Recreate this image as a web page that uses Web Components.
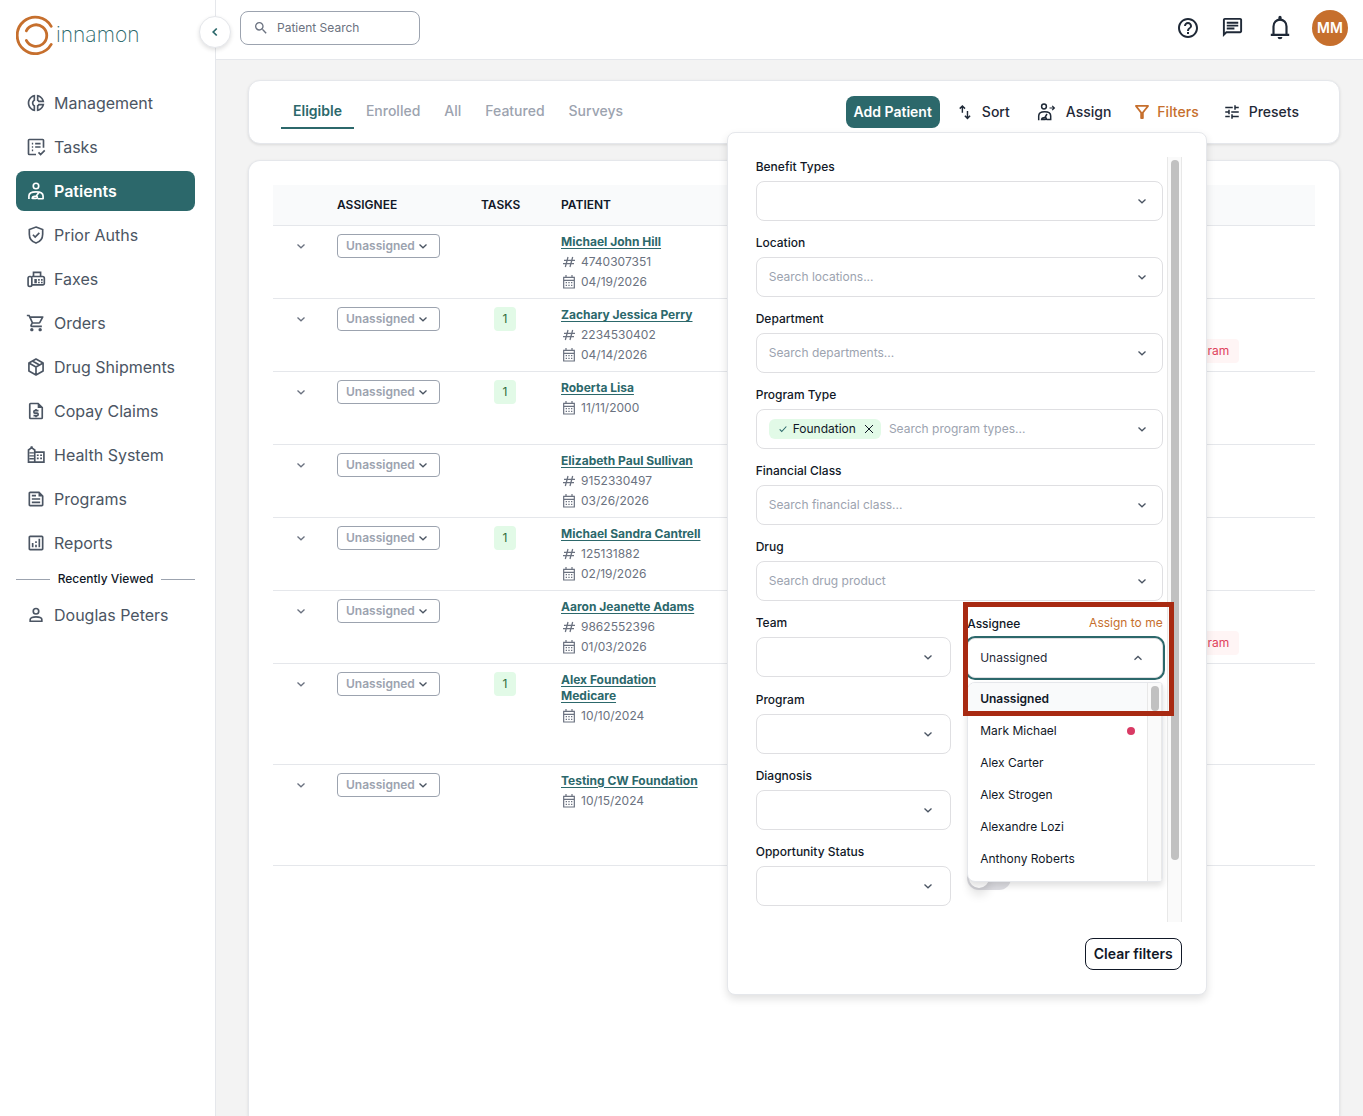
<!DOCTYPE html>
<html lang="en">
<head>
<meta charset="utf-8">
<meta name="viewport" content="width=device-width, initial-scale=1">
<title>Patients</title>
<style>
  :root {
    --teal: #2c686b;
    --orange: #c66f2d;
    --ink: #111827;
    --ink-soft: #1f2937;
    --slate: #4b5563;
    --gray: #6b7280;
    --muted: #9ca3af;
    --line: #e5e7eb;
    --field: #dfdfe2;
  }

  body {
    margin: 0;
    height: 100vh;
    overflow: hidden;
    font: 12px/16px Inter, "Liberation Sans", sans-serif;
    color: var(--ink);
    background: #f3f3f3;
  }
</style>
</head>
<body>
<patient-app></patient-app>

<script>
const base = `
  *, *::before, *::after { box-sizing: border-box; }
  button, input, select { font: inherit; color: inherit; background: none; border: 0; margin: 0; padding: 0; outline: 0; }
  button, select { cursor: pointer; }
  select { appearance: none; }
`;

const icons = {
  management: '<path d="M14.82 11h7.13c-.47-4.72-4.23-8.48-8.95-8.95v7.13c.85.31 1.51.97 1.82 1.82zM15 4.58C17 5.4 18.6 7 19.42 9h-3.43c-.28-.37-.62-.71-.99-.99V4.58zM2 12c0 5.19 3.95 9.45 9 9.95v-7.13C9.84 14.4 9 13.3 9 12c0-1.3.84-2.4 2-2.82V2.05c-5.05.5-9 4.76-9 9.95zm7-7.42v3.44c-1.23.92-2 2.39-2 3.98 0 1.59.77 3.06 2 3.99v3.44C6.04 18.24 4 15.35 4 12c0-3.35 2.04-6.24 5-7.42zm4 10.24v7.13c4.72-.47 8.48-4.23 8.95-8.95h-7.13c-.31.85-.97 1.51-1.82 1.82zm2 1.17c.37-.28.71-.61.99-.99h3.43C18.6 17 17 18.6 15 19.42v-3.43z"/>',
  tasks: '<path d="M21 13V4a1 1 0 0 0-1-1H4a1 1 0 0 0-1 1v16a1 1 0 0 0 1 1h8M11 8h6.5M11 12h6.5M7 8h1.6M7 12h1.6M7 16h1.6M15 18.5l2.5 2.5 5-5" fill="none" stroke="currentColor" stroke-width="2"/>',
  patients: '<g fill="none" stroke="currentColor" stroke-width="2"><circle cx="12" cy="6" r="3.3"/><path d="M3.5 21.5V18c0-3.4 3.4-5 8.5-5s8.5 1.6 8.5 5v3.5M7.5 21.5c0-2 1-3 3-3h1.5l3.2-4.5M12 18.5c2.5 0 2 2.5 0 2.5H7.5M14 21.3h7"/></g>',
  auths: '<path d="M12 2.5l8 3V11c0 5-3.3 9.1-8 10.7C7.3 20.1 4 16 4 11V5.5zM8.3 11.7l2.7 2.7 5-5" fill="none" stroke="currentColor" stroke-width="2"/>',
  faxes: '<g fill="none" stroke="currentColor" stroke-width="2"><rect x="2.5" y="9" width="4.5" height="12" rx="2"/><path d="M7 19h13.5a1.5 1.5 0 0 0 1.5-1.5V11a2 2 0 0 0-2-2H7M9 9V4h8.5v5"/></g><path d="M10 12h3v5h-3zM14.5 12h2v2h-2zM18 12h2v2h-2zM14.5 15.2h2v2h-2zM18 15.2h2v2h-2z"/>',
  orders: '<path d="M15.55 13c.75 0 1.41-.41 1.75-1.03l3.58-6.49A.996.996 0 0 0 20.01 4H5.21l-.94-2H1v2h2l3.6 7.59-1.35 2.44C4.52 15.37 5.48 17 7 17h12v-2H7l1.1-2h7.45zM6.16 6h12.15l-2.76 5H8.53L6.16 6zM7 18c-1.1 0-1.99.9-1.99 2S5.9 22 7 22s2-.9 2-2-.9-2-2-2zm10 0c-1.1 0-1.99.9-1.99 2s.89 2 1.99 2 2-.9 2-2-.9-2-2-2z"/>',
  shipments: '<path d="M12 2.5l8.5 4.7v9.6L12 21.5l-8.5-4.7V7.2zM3.5 7.2L12 12l8.5-4.8M12 12v9.5M7.7 4.9l8.5 4.8" fill="none" stroke="currentColor" stroke-width="2" stroke-linejoin="round"/>',
  claims: '<path d="M14.5 3H5.5a1 1 0 0 0-1 1v16a1 1 0 0 0 1 1h13a1 1 0 0 0 1-1V8z" fill="none" stroke="currentColor" stroke-width="2"/><path d="M14 2.5V8.5H20z"/><path d="M15 11.5h-4.5a1 1 0 0 0-1 1v1a1 1 0 0 0 1 1h3a1 1 0 0 1 1 1v1a1 1 0 0 1-1 1H9M12 9.5v2M12 17.5v2" fill="none" stroke="currentColor" stroke-width="2"/>',
  health: '<g fill="none" stroke="currentColor" stroke-width="2"><path d="M10.5 20.5H3V6L6.700 3.2l3.8 2.8V20.5H21.5V8.5H10.5"/><path d="M4 9.5h5.5M4 13h5.5M4 16.500h5.500" stroke-width="1.6"/></g><path d="M13 11.3h2.2v2H13zM17 11.3h2.2v2H17zM13 15h2.2v2H13zM17 15h2.2v2H17zM5.5 1.5h2.5v3H5.5z"/>',
  programs: '<path d="M16 3H5c-1.1 0-2 .9-2 2v14c0 1.1.9 2 2 2h14c1.1 0 2-.9 2-2V8l-5-5zm3 16H5V5h10v4h4v10zM7 17h10v-2H7v2zm5-10H7v2h5V7zm-5 6h10v-2H7v2z"/>',
  reports: '<path d="M19 3H5c-1.1 0-2 .9-2 2v14c0 1.1.9 2 2 2h14c1.1 0 2-.9 2-2V5c0-1.1-.9-2-2-2zm0 16H5V5h14v14zM7 12h2v5H7zm8-5h2v10h-2zm-4 7h2v3h-2zm0-4h2v2h-2z"/>',
  person: '<g fill="none" stroke="currentColor" stroke-width="2"><circle cx="12" cy="7.5" r="3.3"/><path d="M5 19.5v-2c0-2 3.5-3.3 7-3.3s7 1.3 7 3.3v2z"/></g>',
  search: '<path d="M15.5 14h-.79l-.28-.27A6.471 6.471 0 0 0 16 9.5 6.5 6.5 0 1 0 9.5 16c1.61 0 3.09-.59 4.23-1.57l.27.28v.79l5 4.99L20.49 19l-4.99-5zm-6 0C7.01 14 5 11.99 5 9.5S7.01 5 9.5 5 14 7.01 14 9.5 11.99 14 9.5 14z"/>',
  help: '<path d="M11 18h2v-2h-2v2zm1-16C6.48 2 2 6.48 2 12s4.48 10 10 10 10-4.48 10-10S17.52 2 12 2zm0 18c-4.41 0-8-3.59-8-8s3.59-8 8-8 8 3.59 8 8-3.59 8-8 8zm0-14c-2.21 0-4 1.79-4 4h2c0-1.1.9-2 2-2s2 .9 2 2c0 2-3 1.75-3 5h2c0-2.25 3-2.5 3-5 0-2.21-1.79-4-4-4z"/>',
  chat: '<path d="M4 4h16v12H5.17L4 17.17V4m0-2c-1.1 0-1.99.9-1.99 2L2 22l4-4h14c1.1 0 2-.9 2-2V4c0-1.1-.9-2-2-2H4zm2 10h8v2H6v-2zm0-3h12v2H6V9zm0-3h12v2H6V6z"/>',
  bell: '<path d="M6 18V10.5a6 6.3 0 0 1 12 0V18M3.5 18.3h17" fill="none" stroke="currentColor" stroke-width="2"/><path d="M10.5 2.3a1.5 1.5 0 0 1 3 0V5h-3zM9.8 20.3h4.4a2.2 2 0 0 1-4.4 0z"/>',
  sort: '<path d="M8.5 13V4M5 7.5L8.5 4 12 7.5M15.3 10.500V20.500M11.800 17l3.500 3.500 3.500-3.500" fill="none" stroke="currentColor" stroke-width="1.9"/>',
  assign: '<g fill="none" stroke="currentColor" stroke-width="1.5"><circle cx="10" cy="6.5" r="2.4"/><path d="M4.7 20.3V16c0-2.7 2.5-4.2 6-4.2s6 1.5 6 4.2v3.5H12.5M7.5 20.3c0-1.8.8-2.6 2.3-2.6h1l2.2-3.7M10.8 17.6c2.3 0 1.8 1.9 0 1.9H7.5"/></g><path d="M15.5 8h4.5M18.2 5.8L20.4 8l-2.2 2.2" fill="none" stroke="currentColor" stroke-width="1.2"/>',
  funnel: '<path d="M7 6h10l-5.01 6.3L7 6zm-2.75-.39C6.27 8.2 10 13 10 13v6c0 .55.45 1 1 1h2c.55 0 1-.45 1-1v-6s3.72-4.8 5.74-7.39A.998.998 0 0 0 18.95 4H5.04c-.83 0-1.3.95-.79 1.61z"/>',
  tune: '<path d="M3 17v2h6v-2H3zM3 5v2h10V5H3zm10 16v-2h8v-2h-8v-2h-2v6h2zM7 9v2H3v2h4v2h2V9H7zm14 4v-2H11v2h10zm-6-4h2V7h4V5h-4V3h-2v6z"/>',
  down: '<path d="M5 9l7 6.5L19 9" fill="none" stroke="currentColor" stroke-width="2.6"/>',
  up: '<path d="M5 15.5L12 9l7 6.5" fill="none" stroke="currentColor" stroke-width="2.6"/>',
  left: '<path d="M15 6l-6 6 6 6" fill="none" stroke="currentColor" stroke-width="3"/>',
  check: '<path d="M4 13l5 5L20 6" fill="none" stroke="currentColor" stroke-width="2.6"/>',
  close: '<path d="M4 4l16 16M20 4L4 20" fill="none" stroke="currentColor" stroke-width="2"/>',
  hash: '<path d="M10.5 4.5L6.5 19.5M17.5 4.5l-4 15M4.5 9.5h16.5M3 14.5h16.5" fill="none" stroke="currentColor" stroke-width="1.9"/>',
  calendar: '<path d="M4 5h16v16H4zM4 9.5h16M7.5 1.5V5M16.5 1.5V5" fill="none" stroke="currentColor" stroke-width="1.8"/><path d="M7 12h2v2H7zM11 12h2v2h-2zM15 12h2v2h-2zM7 16h2v2H7zM11 16h2v2h-2zM15 16h2v2h-2z"/>',
};

class AppIcon extends HTMLElement {
  constructor() {
    super();
    this.attachShadow({ mode: 'open' });
  }

  connectedCallback() {
    const size = this.getAttribute('size') || 20;
    const box = this.getAttribute('box') || '0 0 24 24';
    this.shadowRoot.innerHTML = `
      <style>
        :host { display: inline-flex; flex: none; width: ${size}px; height: ${size}px; }
        svg { width: 100%; height: 100%; }
      </style>
      <svg viewBox="${box}" fill="currentColor" aria-hidden="true">${icons[this.getAttribute('name')]}</svg>
    `;
  }
}

class NavItem extends HTMLElement {
  constructor() {
    super();
    this.attachShadow({ mode: 'open' });
  }

  connectedCallback() {
    this.shadowRoot.innerHTML = `
      <style>
        ${base}
        :host { display: block; }
        a {
          display: flex;
          align-items: center;
          gap: 8px;
          height: 40px;
          padding: 0 10px;
          border-radius: 8px;
          color: var(--slate);
          font-size: 16px;
          line-height: 24px;
          text-decoration: none;
        }
        :host([active]) a {
          background: var(--teal);
          color: #fff;
          font-weight: 600;
        }
      </style>
      <a href="#"><app-icon name="${this.getAttribute('icon')}"></app-icon><slot></slot></a>
    `;
  }
}

class SideNav extends HTMLElement {
  constructor() {
    super();
    this.attachShadow({ mode: 'open' }).innerHTML = `
      <style>
        ${base}
        :host {
          display: block;
          position: relative;
          padding: 15px 20px 0 16px;
          background: #fff;
          border-right: 1px solid var(--line);
        }
        .logo {
          display: flex;
          align-items: center;
          height: 40px;
          margin-bottom: 28px;
          color: var(--teal);
          font-size: 21px;
          font-weight: 200;
          text-decoration: none;
        }
        .logo svg { width: 40px; height: 40px; }
        nav { display: grid; gap: 4px; }
        .recent {
          display: flex;
          align-items: center;
          gap: 8px;
          height: 24px;
          font-weight: 500;
        }
        .recent::before, .recent::after {
          content: "";
          flex: 1;
          height: 1px;
          background: var(--muted);
        }
        .collapse {
          position: absolute;
          top: 16px;
          right: -16px;
          z-index: 1;
          display: flex;
          align-items: center;
          justify-content: center;
          width: 32px;
          height: 32px;
          border: 1px solid var(--line);
          border-radius: 50%;
          background: #fff;
          color: var(--teal);
          box-shadow: 0 2px 4px #0000001f;
        }
      </style>
      <a class="logo" href="#">
        <svg viewBox="0 0 40 40" fill="none" stroke="var(--orange)" stroke-width="2.8" stroke-linecap="round" aria-hidden="true">
          <path d="M35.2 11.4A18.2 18.2 0 1 0 35.2 29.4"/>
          <path d="M10.3 15.8A10.8 10.8 0 1 1 10.3 25.4"/>
        </svg>
        innamon
      </a>
      <nav>
        <nav-item icon="management">Management</nav-item>
        <nav-item icon="tasks">Tasks</nav-item>
        <nav-item icon="patients" active>Patients</nav-item>
        <nav-item icon="auths">Prior Auths</nav-item>
        <nav-item icon="faxes">Faxes</nav-item>
        <nav-item icon="orders">Orders</nav-item>
        <nav-item icon="shipments">Drug Shipments</nav-item>
        <nav-item icon="claims">Copay Claims</nav-item>
        <nav-item icon="health">Health System</nav-item>
        <nav-item icon="programs">Programs</nav-item>
        <nav-item icon="reports">Reports</nav-item>
        <div class="recent">Recently Viewed</div>
        <nav-item icon="person">Douglas Peters</nav-item>
      </nav>
      <button class="collapse" aria-label="Collapse menu"><app-icon name="left" size="14"></app-icon></button>
    `;
  }
}

class TopBar extends HTMLElement {
  constructor() {
    super();
    this.attachShadow({ mode: 'open' }).innerHTML = `
      <style>
        ${base}
        :host {
          display: flex;
          align-items: center;
          justify-content: space-between;
          height: 60px;
          padding: 0 15px 4px 24px;
          background: #fff;
          border-bottom: 1px solid var(--line);
          color: var(--ink-soft);
        }
        label {
          display: flex;
          align-items: center;
          gap: 8px;
          width: 180px;
          height: 34px;
          padding: 0 12px;
          border: 1px solid var(--muted);
          border-radius: 8px;
          color: var(--gray);
        }
        input { flex: 1; min-width: 0; }
        input::placeholder { color: var(--gray); opacity: 1; }
        .actions, .group { display: flex; align-items: center; }
        .actions { gap: 16px; }
        .group { gap: 12px; }
        button {
          display: flex;
          align-items: center;
          justify-content: center;
          width: 32px;
          height: 32px;
        }
        .avatar {
          width: 36px;
          height: 36px;
          border-radius: 50%;
          background: var(--orange);
          color: #fff;
          font-size: 14px;
          font-weight: 600;
        }
      </style>
      <label>
        <app-icon name="search" size="16"></app-icon>
        <input type="text" aria-label="Patient Search" placeholder="Patient Search">
      </label>
      <div class="actions">
        <div class="group">
          <button aria-label="Help"><app-icon name="help" size="24"></app-icon></button>
          <button aria-label="Messages"><app-icon name="chat" size="23"></app-icon></button>
        </div>
        <button aria-label="Notifications"><app-icon name="bell" size="26"></app-icon></button>
        <button class="avatar">MM</button>
      </div>
    `;
  }
}

class ToolButton extends HTMLElement {
  constructor() {
    super();
    this.attachShadow({ mode: 'open' });
  }

  connectedCallback() {
    const icon = this.getAttribute('icon');
    const size = this.getAttribute('size') || 18;
    const box = this.getAttribute('box') || '0 0 24 24';
    this.shadowRoot.innerHTML = `
      <style>
        ${base}
        :host { display: block; }
        button {
          display: flex;
          align-items: center;
          gap: 8px;
          height: 32px;
          padding: 0 8px;
          border-radius: 8px;
          color: var(--ink-soft);
          font-size: 14px;
          line-height: 20px;
          font-weight: 500;
          white-space: nowrap;
        }
        :host([variant="primary"]) button { background: var(--teal); color: #fff; font-weight: 600; }
        :host([variant="on"]) button { color: var(--orange); }
        :host([variant="outline"]) button { border: 1px solid var(--ink); color: var(--ink); font-weight: 600; }
      </style>
      <button>${icon ? `<app-icon name="${icon}" size="${size}" box="${box}"></app-icon>` : ''}<slot></slot></button>
    `;
  }
}

class PatientToolbar extends HTMLElement {
  constructor() {
    super();
    this.attachShadow({ mode: 'open' }).innerHTML = `
      <style>
        ${base}
        :host {
          display: flex;
          align-items: center;
          justify-content: space-between;
          height: 64px;
          padding: 0 32px;
          background: #fff;
          border: 1px solid var(--line);
          border-radius: 12px;
          box-shadow: 0 1px 3px #0000001a;
        }
        .tabs, .tools { display: flex; align-items: center; }
        .tools { gap: 8px; }
        .tabs button {
          height: 34px;
          padding: 0 12px;
          border-bottom: 2px solid transparent;
          color: var(--muted);
          font-size: 14px;
          font-weight: 500;
        }
        .tabs [aria-selected="true"] { border-color: var(--teal); color: var(--teal); font-weight: 600; }
        .anchor { position: relative; }
        filter-panel {
          position: absolute;
          top: 36px;
          right: 0;
          z-index: 2;
        }
      </style>
      <div class="tabs" role="tablist">
        <button role="tab" aria-selected="true">Eligible</button>
        <button role="tab">Enrolled</button>
        <button role="tab">All</button>
        <button role="tab">Featured</button>
        <button role="tab">Surveys</button>
      </div>
      <div class="tools">
        <tool-button variant="primary">Add Patient</tool-button>
        <tool-button icon="sort">Sort</tool-button>
        <tool-button icon="assign" size="24">Assign</tool-button>
        <div class="anchor">
          <tool-button icon="funnel" size="14" box="4 4 16 16" variant="on">Filters</tool-button>
          <filter-panel></filter-panel>
        </div>
        <tool-button icon="tune">Presets</tool-button>
      </div>
    `;
  }
}

class FilterField extends HTMLElement {
  constructor() {
    super();
    this.attachShadow({ mode: 'open' });
  }

  connectedCallback() {
    const hint = this.getAttribute('placeholder');
    const value = this.getAttribute('value') || '';
    const open = this.hasAttribute('open');
    const control = hint || open
      ? `<input id="control" type="text" role="combobox" aria-expanded="${open}" placeholder="${hint || ''}" value="${value}">`
      : '<select id="control"><option></option></select>';
    this.shadowRoot.innerHTML = `
      <style>
        ${base}
        :host { display: block; position: relative; }
        .head {
          display: flex;
          justify-content: space-between;
          min-height: 20px;
          margin-bottom: 4px;
          line-height: 20px;
        }
        label { font-weight: 500; }
        .box {
          display: flex;
          align-items: center;
          gap: 8px;
          height: 40px;
          padding: 0 14px 0 12px;
          border: 1px solid var(--field);
          border-radius: 8px;
          background: #fff;
          color: var(--ink-soft);
        }
        :host([half]) .box { padding-right: 16px; }
        :host([open]) .head { height: 21px; align-items: end; }
        :host([open]) .box { padding-right: 18px; box-shadow: 0 0 0 2px var(--teal); }
        input, select { flex: 1; min-width: 0; height: 100%; padding-bottom: 2px; }
        input::placeholder { color: var(--muted); opacity: 1; }
        app-icon { pointer-events: none; color: var(--slate); }
      </style>
      <div class="head"><label for="control">${this.getAttribute('label')}</label><slot name="action"></slot></div>
      <div class="box">
        <slot name="chip"></slot>
        ${control}
        <app-icon name="${open ? 'up' : 'down'}" size="12"></app-icon>
      </div>
      <slot></slot>
    `;
  }
}

class FilterChip extends HTMLElement {
  constructor() {
    super();
    this.attachShadow({ mode: 'open' }).innerHTML = `
      <style>
        ${base}
        :host {
          display: flex;
          align-items: center;
          gap: 5px;
          height: 20px;
          padding: 0 5px 0 9px;
          border-radius: 6px;
          background: #e2fae7;
          color: var(--ink);
        }
        .check { color: var(--teal); }
        button { display: flex; padding: 0 1px 0 2px; }
      </style>
      <app-icon class="check" name="check" size="10"></app-icon>
      <slot></slot>
      <button aria-label="Remove"><app-icon name="close" size="12"></app-icon></button>
    `;
  }
}

class ScrollRail extends HTMLElement {
  constructor() {
    super();
    this.attachShadow({ mode: 'open' }).innerHTML = `
      <style>
        :host {
          display: block;
          flex: none;
          box-sizing: border-box;
          width: 15px;
          padding: 3px;
          background: #fafafa;
          border: solid #e8e8e8;
          border-width: 0 1px;
        }
        div { width: 8px; height: var(--thumb); border-radius: 4px; background: #c1c1c1; }
      </style>
      <div></div>
    `;
  }
}

class AssigneeList extends HTMLElement {
  constructor() {
    super();
    this.attachShadow({ mode: 'open' }).innerHTML = `
      <style>
        ${base}
        :host {
          display: flex;
          height: 200px;
          overflow: hidden;
          background: #fff;
          border: 1px solid var(--line);
          border-radius: 8px 4px 4px 8px;
          box-shadow: 0 4px 6px #0000001f;
        }
        ul { flex: 1; margin: 0; padding: 0; list-style: none; }
        li {
          display: flex;
          align-items: center;
          justify-content: space-between;
          height: 32px;
          padding: 0 12px;
        }
        [aria-selected="true"] { background: #f9fafb; font-weight: 600; }
        .dot { width: 8px; height: 8px; border-radius: 50%; background: #d93a64; }
        scroll-rail { --thumb: 25px; }
      </style>
      <ul role="listbox">
        <li role="option" aria-selected="true">Unassigned</li>
        <li role="option">Mark Michael <span class="dot"></span></li>
        <li role="option">Alex Carter</li>
        <li role="option">Alex Strogen</li>
        <li role="option">Alexandre Lozi</li>
        <li role="option">Anthony Roberts</li>
      </ul>
      <scroll-rail></scroll-rail>
    `;
  }
}

class FilterPanel extends HTMLElement {
  constructor() {
    super();
    this.attachShadow({ mode: 'open' }).innerHTML = `
      <style>
        ${base}
        :host {
          display: block;
          width: 480px;
          padding: 24px;
          background: #fff;
          border: 1px solid var(--line);
          border-radius: 8px;
          box-shadow: 0 4px 8px #0000001f;
        }
        .scroll { display: flex; height: 765px; overflow: hidden; }
        .fields {
          flex: 1;
          display: grid;
          grid-template-columns: repeat(2, minmax(0, 1fr));
          align-content: start;
          gap: 12px 16px;
          padding: 0 4px;
        }
        .wide { grid-column: 1 / -1; }
        .left { grid-column: 1; }
        .assign-me { align-self: start; height: 20px; color: var(--orange); }
        assignee-list {
          position: absolute;
          top: calc(100% + 4px);
          left: 0;
          right: 0;
          z-index: 1;
        }
        .frame {
          position: absolute;
          inset: -11px -11px -38px -4px;
          z-index: 2;
          border: 5px solid #a82a12;
          pointer-events: none;
        }
        .toggle {
          appearance: none;
          align-self: center;
          width: 44px;
          height: 24px;
          margin-top: 8px;
          padding: 2px;
          border-radius: 12px;
          background: #dedee3;
        }
        .toggle::before {
          content: "";
          display: block;
          width: 20px;
          height: 20px;
          border-radius: 50%;
          background: #fff;
          box-shadow: 0 8px 10px #0000001a;
        }
        .scroll > scroll-rail { --thumb: 700px; }
        footer { display: flex; justify-content: end; margin-top: 16px; }
      </style>
      <div class="scroll">
        <div class="fields">
          <filter-field class="wide" label="Benefit Types"></filter-field>
          <filter-field class="wide" label="Location" placeholder="Search locations..."></filter-field>
          <filter-field class="wide" label="Department" placeholder="Search departments..."></filter-field>
          <filter-field class="wide" label="Program Type" placeholder="Search program types...">
            <filter-chip slot="chip">Foundation</filter-chip>
          </filter-field>
          <filter-field class="wide" label="Financial Class" placeholder="Search financial class..."></filter-field>
          <filter-field class="wide" label="Drug" placeholder="Search drug product"></filter-field>
          <filter-field half label="Team"></filter-field>
          <filter-field open label="Assignee" value="Unassigned">
            <button class="assign-me" slot="action">Assign to me</button>
            <assignee-list></assignee-list>
            <div class="frame"></div>
          </filter-field>
          <filter-field class="left" half label="Program"></filter-field>
          <filter-field class="left" half label="Diagnosis"></filter-field>
          <filter-field class="left" half label="Opportunity Status"></filter-field>
          <input class="toggle" type="checkbox" role="switch" aria-label="Active only">
        </div>
        <scroll-rail></scroll-rail>
      </div>
      <footer><tool-button variant="outline">Clear filters</tool-button></footer>
    `;
  }
}

const patients = [
  { name: 'Michael John Hill', id: '4740307351', date: '04/19/2026' },
  { name: 'Zachary Jessica Perry', id: '2234530402', date: '04/14/2026', tasks: 1, tag: 'Program' },
  { name: 'Roberta Lisa', date: '11/11/2000', tasks: 1 },
  { name: 'Elizabeth Paul Sullivan', id: '9152330497', date: '03/26/2026' },
  { name: 'Michael Sandra Cantrell', id: '125131882', date: '02/19/2026', tasks: 1 },
  { name: 'Aaron Jeanette Adams', id: '9862552396', date: '01/03/2026', tag: 'Program' },
  { name: 'Alex Foundation<br>Medicare', date: '10/10/2024', tasks: 1, tall: true },
  { name: 'Testing CW Foundation', date: '10/15/2024', tall: true },
];

class PatientTable extends HTMLElement {
  constructor() {
    super();
    this.attachShadow({ mode: 'open' }).innerHTML = `
      <style>
        ${base}
        :host {
          display: block;
          padding: 24px;
          background: #fff;
          border: 1px solid var(--line);
          border-radius: 12px;
          box-shadow: 0 1px 3px #0000001a;
        }
        table { width: 100%; table-layout: fixed; border-collapse: separate; border-spacing: 0; }
        th, td { padding: 8px; border-bottom: 1px solid var(--line); vertical-align: top; text-align: left; }
        th { height: 41px; padding: 0 8px; background: #f9fafb; font-weight: 600; vertical-align: middle; }
        td { height: 73px; }
        .tall td { height: 101px; }
        .expand { width: 56px; }
        .assignee { width: 144px; }
        .tasks { width: 80px; }
        .patient { width: 176px; }
        .program { width: 152px; }
        .expand button {
          display: flex;
          align-items: center;
          justify-content: center;
          width: 100%;
          height: 24px;
          color: var(--gray);
        }
        .picker { display: inline-grid; align-items: center; vertical-align: top; }
        .picker > * { grid-area: 1 / 1; }
        .picker app-icon { justify-self: end; margin-right: 11px; pointer-events: none; color: var(--slate); }
        select {
          width: 103px;
          height: 24px;
          padding: 0 8px;
          border: 1px solid var(--muted);
          border-radius: 4px;
          color: var(--muted);
          font-weight: 600;
        }
        td.tasks { padding-right: 24px; text-align: center; }
        .badge, .tag {
          display: inline-block;
          height: 24px;
          border-radius: 4px;
          line-height: 24px;
        }
        .badge { min-width: 22px; background: #e2fae7; color: #2f6b3c; }
        .tag { padding: 0 10px; background: #fff5f5; color: #e0435c; }
        td.program { vertical-align: bottom; }
        td.patient { display: grid; gap: 4px; align-content: start; justify-items: start; }
        a { color: var(--teal); font-weight: 700; text-underline-offset: 2px; }
        .meta { display: flex; align-items: center; gap: 4px; height: 16px; color: var(--gray); }
      </style>
      <table>
        <thead>
          <tr>
            <th class="expand"></th>
            <th class="assignee">ASSIGNEE</th>
            <th class="tasks">TASKS</th>
            <th class="patient">PATIENT</th>
            <th></th>
            <th class="program"></th>
          </tr>
        </thead>
        <tbody>${patients.map(row => this.row(row)).join('')}</tbody>
      </table>
    `;
  }

  row({ name, id, date, tasks, tag, tall }) {
    const meta = (icon, text) => text
      ? `<div class="meta"><app-icon name="${icon}" size="16"></app-icon>${text}</div>`
      : '';
    return `
      <tr class="${tall ? 'tall' : ''}">
        <td class="expand"><button aria-label="Expand row"><app-icon name="down" size="12"></app-icon></button></td>
        <td class="assignee">
          <div class="picker">
            <select aria-label="Assignee"><option>Unassigned</option></select>
            <app-icon name="down" size="12"></app-icon>
          </div>
        </td>
        <td class="tasks">${tasks ? `<span class="badge">${tasks}</span>` : ''}</td>
        <td class="patient"><a href="#">${name}</a>${meta('hash', id)}${meta('calendar', date)}</td>
        <td></td>
        <td class="program">${tag ? `<span class="tag">${tag}</span>` : ''}</td>
      </tr>
    `;
  }
}

class PatientApp extends HTMLElement {
  constructor() {
    super();
    this.attachShadow({ mode: 'open' }).innerHTML = `
      <style>
        ${base}
        :host {
          display: grid;
          grid-template-columns: 216px 1fr;
          height: 100vh;
        }
        .page { display: flex; flex-direction: column; min-width: 0; }
        top-bar { flex: none; }
        main {
          flex: 1;
          display: flex;
          flex-direction: column;
          gap: 16px;
          padding: 20px 23px 0 32px;
        }
        patient-toolbar { flex: none; }
        patient-table { flex: 1; border-bottom: 0; border-radius: 12px 12px 0 0; }
      </style>
      <side-nav></side-nav>
      <div class="page">
        <top-bar></top-bar>
        <main>
          <patient-toolbar></patient-toolbar>
          <patient-table></patient-table>
        </main>
      </div>
    `;
  }
}

customElements.define('app-icon', AppIcon);
customElements.define('nav-item', NavItem);
customElements.define('side-nav', SideNav);
customElements.define('top-bar', TopBar);
customElements.define('tool-button', ToolButton);
customElements.define('filter-field', FilterField);
customElements.define('filter-chip', FilterChip);
customElements.define('scroll-rail', ScrollRail);
customElements.define('assignee-list', AssigneeList);
customElements.define('filter-panel', FilterPanel);
customElements.define('patient-toolbar', PatientToolbar);
customElements.define('patient-table', PatientTable);
customElements.define('patient-app', PatientApp);
</script>
</body>
</html>
